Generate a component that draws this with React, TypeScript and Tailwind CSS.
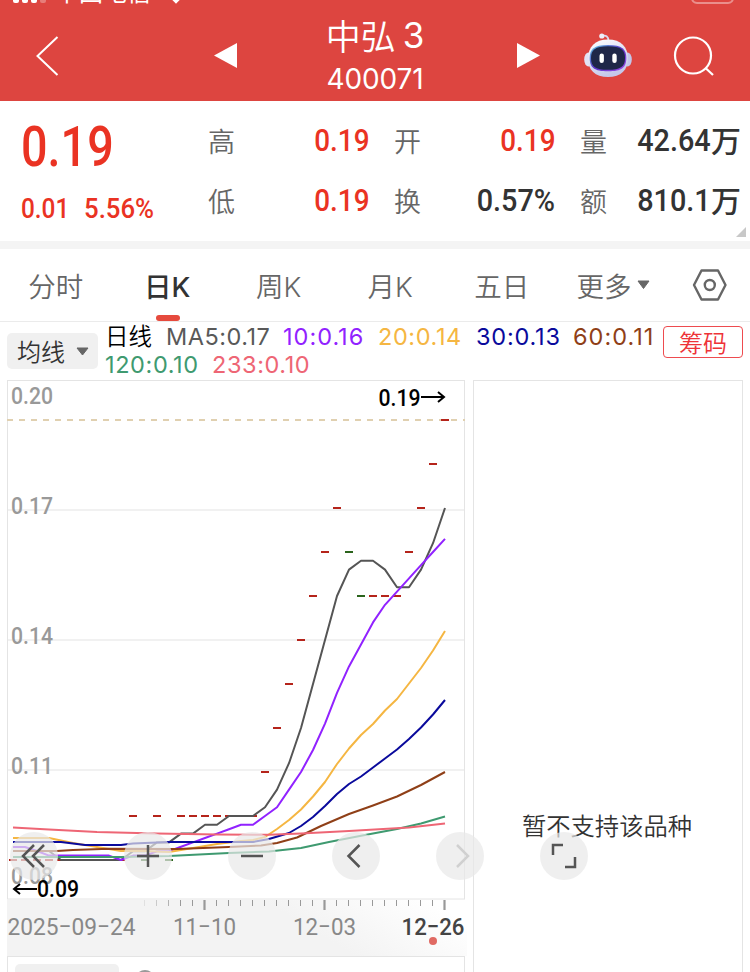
import clsx from "clsx";

// closing prices, one per trading day
const closes = [
  0.09, 0.09, 0.09, 0.09, 0.09, 0.09, 0.09, 0.09, 0.09, 0.09, 0.1, 0.09, 0.1, 0.09, 0.1, 0.1, 0.1, 0.1, 0.1, 0.1, 0.1,
  0.11, 0.12, 0.13, 0.14, 0.15, 0.16, 0.17, 0.16, 0.15, 0.15, 0.15, 0.15, 0.16, 0.17, 0.18, 0.19,
];

const STEP = 12;
const px = (i: number) => 6 + i * STEP;
const py = (v: number) => 40 + (0.19 - v) * 4400;

// simple moving average, the first days come from older history
function sma(n: number, seed: number[]) {
  return closes
    .map((_, i) => {
      const y = i < seed.length ? seed[i] : py(closes.slice(i - n + 1, i + 1).reduce((s, c) => s + c, 0) / n);
      return `${px(i)},${y.toFixed(1)}`;
    })
    .join(" ");
}

const lines = [
  { color: "#555555", points: sma(5, [471, 471, 471, 471, 480]) },
  { color: "#9122ff", points: sma(10, [467, 467, 471, 475.6, 475.6, 475.6, 475.6, 475.6, 475.6, 480]) },
  { color: "#f5b642", points: "6,458 42,458 66,463 90,467 114,471 138,471 162,472 186,468 210,464 234,461 246,460 258,457 270,449 282,440 294,429.5 306,416.5 318,402 330,384 342,368.500 354,355 366,344 378,330.500 390,319 402,303.500 414,288 426,270.500 438,251" },
  { color: "#0a0a9c", points: "6,462 54,462 78,465 114,465 126,463.5 162,462 246,462 262,459 282,453 294,446 306,437 318,426 330,414 342,404 354,396.500 366,387.500 378,378.500 390,369.500 402,359 414,347.500 426,334.500 438,320" },
  { color: "#8f3f17", points: "6,471 50,471 66,470 102,468.8 170,469 222,467 254,465.5 270,463 290,457.500 314,446 342,434 366,425.500 390,416.500 414,405 438,392" },
  { color: "#3f9a70", points: "6,477 54,477 114,477 162,476 222,473 262,471.5 294,468 322,462 358,455 390,449 414,443.5 438,436.5" },
  { color: "#ee6675", points: "6,447.5 42,449.5 90,452 150,453.5 210,454.5 262,454.8 294,453.5 342,451 402,447.5 438,443.5" },
];

const averages = [
  { text: "日线", cls: "text-black w-[61px] font-[350] tracking-normal" },
  { text: "MA5:0.17", cls: "text-[#595959] w-[117px] tracking-[0.500px]" },
  { text: "10:0.16", cls: "text-[#9122ff] w-[95px]" },
  { text: "20:0.14", cls: "text-[#f5b642] w-[98px] tracking-[0.600px]" },
  { text: "30:0.13", cls: "text-[#0a0a9c] w-[97px] tracking-[0.800px]" },
  { text: "60:0.11", cls: "text-[#8f3f17]" },
];

const quotes = [
  [
    { label: "高", value: "0.19", red: true },
    { label: "低", value: "0.19", red: true },
  ],
  [
    { label: "开", value: "0.19", red: true },
    { label: "换", value: "0.57%" },
  ],
  [
    { label: "量", value: "42.64", unit: "万" },
    { label: "额", value: "810.1", unit: "万" },
  ],
];

const tabs = ["分时", "日K", "周K", "月K", "五日"];

function Robot() {
  return (
    <svg width="50" height="46" viewBox="0 0 50 46">
      <defs>
        <linearGradient id="shell" x1="0" y1="0" x2="0.4" y2="1">
          <stop offset="0" stopColor="#ffffff" />
          <stop offset="1" stopColor="#c5c8ea" />
        </linearGradient>
        <linearGradient id="rim" x1="0" y1="0" x2="1" y2="1">
          <stop offset="0" stopColor="#5cc8e0" />
          <stop offset="0.5" stopColor="#5b35c8" />
          <stop offset="1" stopColor="#a04de8" />
        </linearGradient>
      </defs>
      <path d="M19 4 Q25.500 2.500 25.500 9" fill="none" stroke="#d9d9ee" strokeWidth="1.800" />
      <circle cx="18.800" cy="4" r="2.600" fill="#eeeef8" />
      <ellipse cx="5.500" cy="27.500" rx="4.300" ry="7" fill="#e2e2f4" />
      <ellipse cx="44.500" cy="27.500" rx="4.300" ry="7" fill="#c4c6e8" />
      <path d="M25 7.500 C38 7.500 45 15 45 26.500 C45 38 38 45 25 45 C12 45 5 38 5 26.500 C5 15 12 7.500 25 7.500Z" fill="url(#shell)" />
      <path d="M25 13 C39 13 43.300 17 43.300 26 C43.300 35.500 39 39.300 25 39.300 C11 39.300 6.700 35.500 6.700 26 C6.700 17 11 13 25 13Z" fill="url(#rim)" />
      <path d="M25 14.200 C38 14.200 42 18 42 26 C42 34.500 38 37.800 25 37.800 C12 37.800 8 34.500 8 26 C8 18 12 14.200 25 14.200Z" fill="#1f2748" />
      <rect x="16.500" y="21.500" width="4.400" height="9.500" rx="2.200" fill="#fff" />
      <rect x="29.300" y="21.500" width="4.400" height="9.500" rx="2.200" fill="#fff" />
    </svg>
  );
}

function Header() {
  return (
    <header className="relative h-[101px] shrink-0 overflow-hidden bg-[#dd4540] text-white">
      {/* status bar, mostly scrolled off */}
      <div className="absolute left-[13px] top-[-4px] flex gap-[3px]">
        <i className="h-[7px] w-[6px] rounded-[2px] bg-white" />
        <i className="h-[7px] w-[6px] rounded-[2px] bg-white" />
        <i className="h-[7px] w-[6px] rounded-[2px] bg-white" />
        <i className="h-[7px] w-[6px] rounded-[2px] bg-white/30" />
      </div>
      <span className="absolute left-[55px] top-[-21px] text-[24px] leading-[24px]">中国电信</span>
      <i className="absolute left-[172px] top-[-6px] size-[8px] rotate-45 bg-white" />
      <span className="absolute left-[338px] top-[-26px] font-[Inter] text-[28px] font-semibold leading-[32px] tracking-[-1.500px]">08:00</span>
      <i className="absolute left-[691px] top-[-16px] h-[20px] w-[43px] rounded-[6px] border-2 border-white/40" />

      <svg className="absolute left-[34px] top-[34px]" width="26" height="44" viewBox="0 0 26 44" fill="none" stroke="#fff" strokeWidth="2">
        <path d="M23.500 3 L3.500 22 L23.500 41" />
      </svg>
      <svg className="absolute left-[213px] top-[41px]" width="25" height="28">
        <path d="M1 14.500 L24 2 V27Z" fill="#fff" />
      </svg>
      <div className="flex flex-col items-center pt-[14px]">
        <h1 className="flex items-center gap-[7px] text-[35px] font-[350] leading-[44px]">
          <span className="relative -top-px">中弘</span>
          <span className="relative -top-px font-[Inter] font-normal">3</span>
        </h1>
        <span className="font-[Inter] text-[28px] leading-[42px] tracking-[-0.100px]">400071</span>
      </div>
      <svg className="absolute left-[516px] top-[41px]" width="25" height="28">
        <path d="M24 14.500 L1 2 V27Z" fill="#fff" />
      </svg>
      <div className="absolute left-[583px] top-[32px]">
        <Robot />
      </div>
      <svg className="absolute left-[672px] top-[34px]" width="44" height="44" fill="none" stroke="#fff" strokeWidth="2.200">
        <circle cx="21" cy="21.500" r="18" />
        <path d="M33.500 34 L41 41" />
      </svg>
    </header>
  );
}

function Quote() {
  return (
    <section className="relative flex h-[148px] shrink-0 border-b-8 border-[#f4f4f4]">
      <div className="w-[209px] pl-[21px] pt-[16px] font-[Roboto] font-medium text-[#ea3323]">
        <div className="origin-left scale-x-[0.85] text-[55px] leading-[60px]">0.19</div>
        <div className="flex pt-[16px] text-[28px] leading-[32px]">
          <span className="w-[63px] origin-left scale-x-[0.87]">0.01</span>
          <span className="origin-left scale-x-[0.92]">5.56%</span>
        </div>
      </div>
      <div className="flex gap-[26px] pt-[10px]">
        {quotes.map((col, i) => (
          <div key={i} className="w-[160px]">
            {col.map((q) => (
              <div key={q.label} className="flex h-[60px] items-center justify-between">
                <span className="relative -left-px text-[27px] font-[350] text-[#666]">{q.label}</span>
                <span className={clsx("flex h-[40px] items-center pb-[2px] leading-[40px] text-[#333]", q.red && "text-[#ea3323]")}>
                  <span className={clsx("origin-right font-[Roboto] text-[32px] font-medium", q.red ? "scale-x-[0.87]" : "scale-x-[0.9]")}>{q.value}</span>
                  {q.unit && <span className="relative -top-px text-[30px] font-medium">{q.unit}</span>}
                </span>
              </div>
            ))}
          </div>
        ))}
      </div>
      <svg className="absolute bottom-[4px] right-[4px]" width="10" height="10">
        <path d="M10 0 V10 H0Z" fill="#c8c8c8" />
      </svg>
    </section>
  );
}

function Tabs() {
  return (
    <nav className="flex h-[73px] shrink-0 border-b border-[#ebebeb] font-[Inter,'Noto_Sans_CJK_SC',sans-serif] text-[27.500px] font-[350] text-[#666]">
      {tabs.map((t, i) => (
        <div key={t} className={clsx("relative w-[111.500px] pt-[18px] text-center leading-[40px]", i === 1 && "font-medium text-[#333]")}>
          {t}
          {i === 1 && <i className="absolute bottom-0 left-[44px] h-[6px] w-[24px] rounded-full bg-[#e64a3d]" />}
        </div>
      ))}
      <div className="flex w-[135px] items-start pl-[19px] pt-[18px] leading-[40px]">
        更多
        <svg className="ml-[5px] mt-[13px]" width="13" height="10">
          <path d="M1 1 H12 L6.500 8.500Z" fill="#666" stroke="#666" strokeLinejoin="round" />
        </svg>
      </div>
      <svg className="-ml-px mt-[19px]" width="36" height="34" fill="none" stroke="#666" strokeWidth="2.400" strokeLinejoin="round">
        <path d="M9.500 2.500 H26 L33.500 17 L26 31.500 H9.500 L2 17Z" />
        <circle cx="17.800" cy="17" r="5" />
      </svg>
    </nav>
  );
}

function Averages() {
  return (
    <div className="flex h-[58px] shrink-0">
      <div className="ml-[7px] mt-[11px] flex h-[36px] w-[91px] items-center rounded-[5px] bg-[#f0f0f0] pl-[10px] text-[24px] font-[350] text-[#333]">
        均线
        <svg className="ml-[11px]" width="13" height="9">
          <path d="M1 1 H12 L6.500 8Z" fill="#666" stroke="#666" strokeLinejoin="round" />
        </svg>
      </div>
      <div className="ml-[7px] w-[558px] whitespace-nowrap pt-px font-[Inter,'Noto_Sans_CJK_SC',sans-serif] text-[23.500px] leading-[28px] tracking-[1px]">
        <div className="flex">
          {averages.map((a) => (
            <span key={a.text} className={clsx("shrink-0", a.cls)}>{a.text}</span>
          ))}
        </div>
        <div className="flex tracking-[0.600px]">
          <span className="w-[107px] text-[#3f9a70]">120:0.10</span>
          <span className="text-[#ee6675]">233:0.10</span>
        </div>
      </div>
      <button className="mt-[4px] h-[32px] w-[80px] rounded-[4px] border border-[#ee4b4f] text-[24px] font-[350] leading-[28px] text-[#ee3338]">筹码</button>
    </div>
  );
}

function Chart() {
  return (
    <svg className="block" width="460" height="520" viewBox="0 0 460 520" fontFamily="Roboto, sans-serif">
      <rect x="0.500" y="0.500" width="457" height="518.500" fill="#fff" stroke="#e4e4e4" />
      {[130, 260, 390].map((y) => (
        <path key={y} d={`M1 ${y} H457`} stroke="#f1f1f1" strokeWidth="2" />
      ))}
      <path d="M0 40 H458" stroke="#e0d0b0" strokeWidth="2" strokeDasharray="6 6" />
      <g fontSize="24" fontWeight="500" fill="#999">
        <text x="4" y="24" textLength="42" lengthAdjust="spacingAndGlyphs">0.20</text>
        <text x="4" y="134" textLength="42" lengthAdjust="spacingAndGlyphs">0.17</text>
        <text x="4" y="264" textLength="42" lengthAdjust="spacingAndGlyphs">0.14</text>
        <text x="4" y="394" textLength="42" lengthAdjust="spacingAndGlyphs">0.11</text>
        <text x="4" y="504" textLength="42" lengthAdjust="spacingAndGlyphs">0.08</text>
      </g>
      {closes.map((c, i) => (
        <path key={i} d={`M${px(i) - 4} ${py(c)} h8`} strokeWidth="2" stroke={[11, 13, 28, 29].includes(i) ? "#2b641c" : "#b5241b"} />
      ))}
      <g fill="none" strokeWidth="2" strokeLinejoin="round">
        {lines.map((l) => (
          <polyline key={l.color} points={l.points} stroke={l.color} />
        ))}
      </g>
      <g fontSize="24" fontWeight="500">
        <text x="371.500" y="25.500" textLength="42" lengthAdjust="spacingAndGlyphs">0.19</text>
        <text x="30" y="517" textLength="42" lengthAdjust="spacingAndGlyphs">0.09</text>
      </g>
      <g fill="none" stroke="#000" strokeWidth="2">
        <path d="M414 17 H437 M431 12 L437 17 L431 22" />
        <path d="M30 509 H7 M13 504 L7 509 L13 514" />
      </g>
    </svg>
  );
}

function Axis() {
  const ticks = Array.from({ length: 26 }, (_, i) => i);
  return (
    <svg className="block" width="460" height="56" fontFamily="Roboto, sans-serif" fontSize="24.500">
      <defs>
        <linearGradient id="strip" x1="0" y1="0.600" x2="1" y2="0.400">
          <stop offset="0" stopColor="#f3f3f3" />
          <stop offset="0.650" stopColor="#f3f3f3" />
          <stop offset="1" stopColor="#ffffff" />
        </linearGradient>
      </defs>
      <rect width="460" height="56" fill="url(#strip)" />
      {ticks.map((i) => {
        const major = i % 10 === 5;
        return <path key={i} d={`M${137.500 + i * 12} 0 V${major ? 10 : 6}`} stroke="#999" strokeWidth={major ? 2.200 : 1} opacity={i < 3 ? 0.2 + i * 0.25 : 1} />;
      })}
      <g fill="#888">
        <text x="0.500" y="35" textLength="128" lengthAdjust="spacingAndGlyphs">2025−09−24</text>
        <text x="166" y="35" textLength="63" lengthAdjust="spacingAndGlyphs">11−10</text>
        <text x="286" y="35" textLength="63" lengthAdjust="spacingAndGlyphs">12−03</text>
      </g>
      <text x="394.500" y="35" textLength="63" lengthAdjust="spacingAndGlyphs" fill="#444" fontWeight="500">12−26</text>
      <circle cx="426" cy="41" r="4" fill="#e06a63" />
    </svg>
  );
}

const controls = [
  { id: "first", x: "left-[10px]", d: "M24 13 L13 24 L24 35 M34 13 L23 24 L34 35", stroke: "#555" },
  { id: "plus", x: "left-[124px]", d: "M13 24 H35 M24 13 V35", stroke: "#555" },
  { id: "minus", x: "left-[228px]", d: "M13 24 H35", stroke: "#555" },
  { id: "prev", x: "left-[332px]", d: "M27.500 13 L16.500 24 L27.500 35", stroke: "#555" },
  { id: "next", x: "left-[436px]", d: "M21 13 L32 24 L21 35", stroke: "#d0d0d0" },
  { id: "full", x: "left-[540px]", d: "M23 13 H13 V23 M35 25 V35 H25", stroke: "#555" },
];

export default function App() {
  return (
    <div className="relative flex h-[972px] w-[750px] flex-col overflow-hidden bg-white font-['Noto_Sans_CJK_SC',sans-serif]">
      <Header />
      <Quote />
      <Tabs />
      <Averages />
      <main className="flex gap-[6px] pl-[7px]">
        <div className="w-[460px]">
          <Chart />
          <Axis />
          <div className="flex h-[40px] w-[458px] gap-[16px] border border-[#e4e4e4] pl-[7px] pt-[7px]">
            <i className="h-[36px] w-[104px] rounded-[5px] bg-[#f0f0f0]" />
            <i className="mt-[6px] size-[20px] rounded-full bg-[#999]" />
          </div>
        </div>
        <div className="h-[600px] w-[270px] border border-[#e4e4e4] pt-[426px] text-center text-[24.300px] font-[350] leading-[36px] text-[#333]">
          <span className="relative -left-px">暂不支持该品种</span>
        </div>
      </main>
      {/* floating chart controls */}
      {controls.map((c) => (
        <button key={c.id} className={clsx("absolute top-[832px] size-[48px] rounded-full bg-[#e8e8e8]/70", c.x)}>
          <svg width="48" height="48" fill="none" stroke={c.stroke} strokeWidth="2.500">
            <path d={c.d} />
          </svg>
        </button>
      ))}
    </div>
  );
}
